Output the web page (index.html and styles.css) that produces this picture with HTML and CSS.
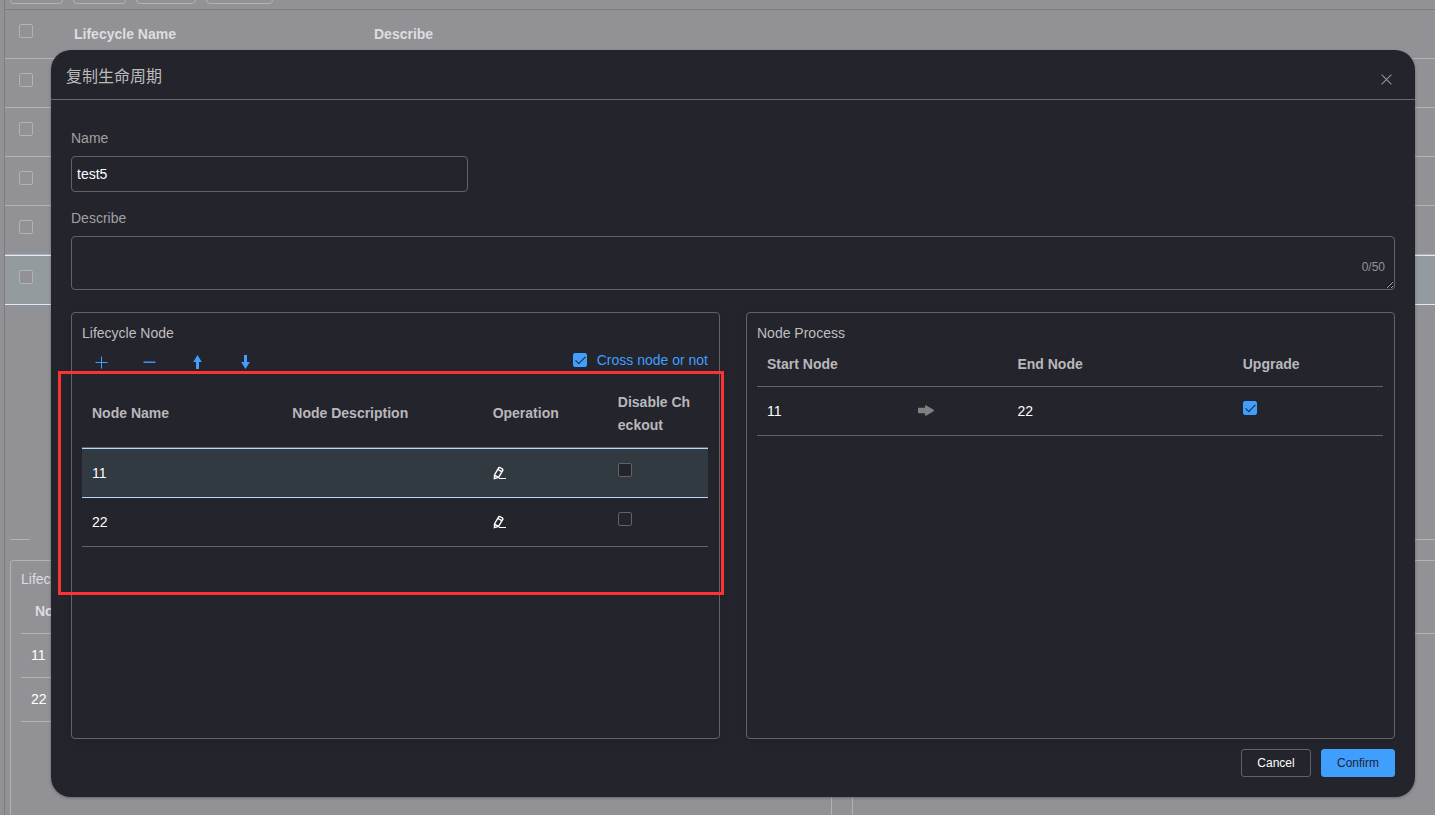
FILE: index.html
```html
<!DOCTYPE html>
<html lang="zh-CN">
<head>
<meta charset="utf-8">
<title>Lifecycle</title>
<link rel="stylesheet" href="styles.css">
</head>
<body>
<div class="page">
  <aside class="rail"></aside>
  <main class="main">
    <div class="actions">
      <button class="ghost w-53" type="button" aria-label="Add"></button>
      <button class="ghost w-53" type="button" aria-label="Edit"></button>
      <button class="ghost w-60" type="button" aria-label="Delete"></button>
      <button class="ghost w-67" type="button" aria-label="Refresh"></button>
    </div>
    <table class="table list">
      <colgroup><col class="c-check"><col class="c-name"><col></colgroup>
      <thead>
        <tr><th class="tick"><input class="check" type="checkbox" aria-label="Select all"></th><th>Lifecycle Name</th><th>Describe</th></tr>
      </thead>
      <tbody>
        <tr><td class="tick"><input class="check" type="checkbox" aria-label="Row 1"></td><td></td><td></td></tr>
        <tr><td class="tick"><input class="check" type="checkbox" aria-label="Row 2"></td><td></td><td></td></tr>
        <tr><td class="tick"><input class="check" type="checkbox" aria-label="Row 3"></td><td></td><td></td></tr>
        <tr><td class="tick"><input class="check" type="checkbox" aria-label="Row 4"></td><td></td><td></td></tr>
        <tr class="current"><td class="tick"><input class="check" type="checkbox" aria-label="Row 5"></td><td></td><td></td></tr>
      </tbody>
    </table>
    <div class="divider"><span class="rule start"></span><span class="rule"></span></div>
    <div class="details">
      <section class="detail">
        <h2 class="panel-title">Lifecycle Node</h2>
        <table class="table compact">
          <thead><tr><th>Node Name</th></tr></thead>
          <tbody><tr><td>11</td></tr><tr><td>22</td></tr></tbody>
        </table>
      </section>
      <section class="detail">
        <h2 class="panel-title">Node Process</h2>
        <table class="table compact">
          <thead><tr><th>Start Node</th></tr></thead>
        </table>
      </section>
    </div>
  </main>
</div>

<div class="overlay">
  <div class="dialog" role="dialog" aria-labelledby="dialog-title">
    <header class="dialog-head">
      <h1 class="dialog-title" id="dialog-title">复制生命周期</h1>
      <button class="close" type="button" aria-label="Close">
        <svg width="11" height="11" viewBox="0 0 11 11"><path d="M.6.6l9.8 9.8M10.4.6L.6 10.4" fill="none" stroke="#909399" stroke-width="1.1"/></svg>
      </button>
    </header>
    <form class="dialog-body">
      <label class="label" for="name">Name</label>
      <input class="text" id="name" type="text" value="test5">
      <label class="label" for="describe">Describe</label>
      <div class="area">
        <textarea class="text multi" id="describe" maxlength="50"></textarea>
        <span class="count">0/50</span>
      </div>
      <div class="panels">
        <section class="panel">
          <h2 class="panel-title">Lifecycle Node</h2>
          <div class="tools">
            <div class="tool-list">
              <button class="tool" type="button" aria-label="Add node"><svg width="14" height="14" viewBox="0 0 14 14"><path d="M7.500 1.500v12M1.500 7.500h12" fill="none" stroke="#409eff" stroke-width="1"/></svg></button>
              <button class="tool" type="button" aria-label="Remove node"><svg width="14" height="14" viewBox="0 0 14 14"><path d="M1.500 7.200h12" fill="none" stroke="#409eff" stroke-width="1.400"/></svg></button>
              <button class="tool" type="button" aria-label="Move up"><svg width="14" height="14" viewBox="0 0 14 14"><path d="M7.500 0l4.300 7H9v7H6V7H3.200z" fill="#409eff"/></svg></button>
              <button class="tool" type="button" aria-label="Move down"><svg width="14" height="14" viewBox="0 0 14 14"><path d="M7.500 14l4.300-7H9V0H6v7H3.200z" fill="#409eff"/></svg></button>
            </div>
            <label class="cross"><input class="check" type="checkbox" checked>Cross node or not</label>
          </div>
          <div class="marked">
            <table class="table nodes">
              <colgroup><col class="c-32"><col class="c-32"><col class="c-20"><col class="c-16"></colgroup>
              <thead><tr><th>Node Name</th><th>Node Description</th><th>Operation</th><th>Disable Checkout</th></tr></thead>
              <tbody>
                <tr class="current"><td>11</td><td></td><td><button class="edit" type="button" aria-label="Edit 11"><svg width="14" height="14" viewBox="0 0 14 14"><path d="M1.400 12.600L1.500 9l4.300-7.400.9-.2 3 1.700.2 1-4.300 7.200zM5 3.500l3.700 2.100M1.600 9.200l3.600 2.200" fill="none" stroke="#fff" stroke-width="1.400"/><path d="M6 12.500h7" stroke="#fff" stroke-width="1"/></svg></button></td><td class="tick"><input class="check" type="checkbox" aria-label="Disable checkout 11"></td></tr>
                <tr><td>22</td><td></td><td><button class="edit" type="button" aria-label="Edit 22"><svg width="14" height="14" viewBox="0 0 14 14"><path d="M1.400 12.600L1.500 9l4.300-7.400.9-.2 3 1.700.2 1-4.300 7.200zM5 3.500l3.700 2.100M1.600 9.200l3.600 2.200" fill="none" stroke="#fff" stroke-width="1.400"/><path d="M6 12.500h7" stroke="#fff" stroke-width="1"/></svg></button></td><td class="tick"><input class="check" type="checkbox" aria-label="Disable checkout 22"></td></tr>
              </tbody>
            </table>
            <div class="marker"></div>
          </div>
        </section>
        <section class="panel">
          <h2 class="panel-title">Node Process</h2>
          <table class="table process">
            <colgroup><col class="c-24"><col class="c-16"><col class="c-36"><col class="c-24"></colgroup>
            <thead><tr><th>Start Node</th><th></th><th>End Node</th><th>Upgrade</th></tr></thead>
            <tbody>
              <tr><td>11</td><td><svg width="18" height="12" viewBox="0 0 18 12"><path d="M2 2.800h6V.8Q8.200 0 9 .2L16.600 4.700Q17.400 5.400 16.600 6.200L9 10.800Q8.200 11 8 10.200V8.300H2Q1 8.300 1 7.300V3.800Q1 2.800 2 2.800z" fill="#808080"/></svg></td><td>22</td><td class="tick"><input class="check" type="checkbox" aria-label="Upgrade" checked></td></tr>
            </tbody>
          </table>
        </section>
      </div>
      <footer class="foot">
        <button class="btn" type="button">Cancel</button>
        <button class="btn primary" type="button">Confirm</button>
      </footer>
    </form>
  </div>
</div>
</body>
</html>
```

FILE: styles.css
```css
* { box-sizing: border-box; }

body {
  margin: 0;
  height: 100vh;
  overflow: hidden;
  background: #929195;
  color: #fff;
  font: 14px/20px "Liberation Sans", "Noto Sans CJK SC", sans-serif;
}

button { padding: 0; border: 0; background: none; font: inherit; color: inherit; }
svg { display: block; }
h1, h2 { margin: 0; font-weight: 400; }

/* list page behind the dialog */
.page {
  --line: #b2b2b3;
  --head: #dddde0;
  --row: #949b9e;
  --edge: #d9ecff;
  --box: #929195;
  display: flex;
  height: 100vh;
}
.rail { flex: none; width: 5px; border-right: 1px solid #7d7d7e; }
.main { flex: 1; min-width: 0; display: flex; flex-direction: column; overflow: hidden; }
.actions {
  flex: none;
  display: flex;
  align-items: flex-end;
  gap: 10px;
  height: 10px;
  padding: 0 5px 5px;
  border-bottom: 1px solid #7d7d7e;
}
.ghost { height: 28px; border: 1px solid var(--line); border-radius: 4px; }
.w-53 { width: 53px; }
.w-60 { width: 60px; }
.w-67 { width: 67px; }
.divider { display: flex; gap: 100px; margin: 234px 0 20px 5px; }
.rule { flex: 1; height: 1px; background: var(--line); }
.rule.start { flex: none; width: 20px; }
.details {
  flex: 1;
  display: grid;
  grid-template-columns: 1fr 1fr;
  gap: 20px;
  width: calc(117% - 4px);
  padding-left: 5px;
}
.detail {
  padding: 8px 10px;
  border: 1px solid var(--line);
  border-bottom: 0;
  border-radius: 4px 4px 0 0;
  color: var(--head);
}
.compact tbody { color: #fff; }

/* tables */
.table { width: 100%; table-layout: fixed; border-spacing: 0; }
.table th, .table td {
  height: 49px;
  padding: 0 10px;
  border-bottom: 1px solid var(--line);
  text-align: left;
  line-height: 23px;
  word-break: break-all;
}
.table th { color: var(--head); }
.table .tick { padding-top: 14px; vertical-align: top; line-height: 14px; }
.table .current td {
  height: 50px;
  border-top: 1px solid var(--edge);
  border-bottom-color: var(--edge);
  background: var(--row);
}
.table.nodes th { height: 71px; padding-top: 3px; }
.table.nodes th:last-child { padding-right: 16px; }
.table.process th { height: 44px; }
.table.compact th { height: 45px; padding-left: 14px; }
.table.compact td { height: 44px; }
.list .tick { padding-left: 14px; }
.c-check { width: 59px; }
.c-name { width: 300px; }
.c-16 { width: 16%; }
.c-20 { width: 20%; }
.c-24 { width: 24%; }
.c-32 { width: 32%; }
.c-36 { width: 36%; }

.check {
  appearance: none;
  position: relative;
  display: block;
  width: 14px;
  height: 14px;
  margin: 0;
  border: 1px solid var(--line);
  border-radius: 2px;
  background: var(--box);
}
.check:checked { border-color: #409eff; background: #409eff; }
.check:checked::after {
  content: "";
  position: absolute;
  left: 4px;
  top: 0;
  width: 4px;
  height: 9px;
  border: solid #24242d;
  border-width: 0 1px 1px 0;
  transform: rotate(45deg);
}

/* dialog */
.overlay { position: absolute; inset: 0; padding: 50px 20px 0 51px; }
.dialog {
  --line: #636363;
  --head: #b8b8bc;
  --row: #313941;
  --edge: #b3d8ff;
  --box: #24242d;
  border-radius: 20px;
  background: #24242d;
  box-shadow: 0 1px 3px rgba(0, 0, 0, .3);
}
.dialog-head {
  display: flex;
  justify-content: space-between;
  height: 50px;
  padding: 15px 23px 0 15px;
  border-bottom: 1px solid #68686b;
}
.dialog-title { font-size: 16px; line-height: 24px; color: #bcbcbc; }
.close { height: 29px; }
.dialog-body { display: flex; flex-direction: column; padding: 28px 20px 20px; }
.label { align-self: flex-start; margin-bottom: 8px; color: #a0a0a0; }
.text {
  width: 30%;
  height: 36px;
  margin: 0 0 16px;
  padding: 0 5px;
  border: 1px solid var(--line);
  border-radius: 4px;
  background: transparent;
  color: #fff;
  font: inherit;
  outline: 0;
}
.area { position: relative; margin-bottom: 22px; }
.multi { display: block; width: 100%; height: 54px; margin: 0; padding: 5px; resize: vertical; color-scheme: dark; }
.count { position: absolute; right: 10px; bottom: 13px; font-size: 12px; color: #909399; }

.panels { display: grid; grid-template-columns: 1fr 1fr; gap: 26px; }
.panel {
  min-width: 0;
  min-height: 427px;
  padding: 10px 11px 10px 10px;
  border: 1px solid var(--line);
  border-radius: 4px;
  box-shadow: 0 2px 12px rgba(0, 0, 0, .1);
}
.panel-title { font-size: 14px; line-height: 20px; color: #bfbfbf; }
.detail .panel-title { color: var(--head); }
.tools { display: flex; justify-content: space-between; align-items: center; height: 34px; }
.tool-list { display: flex; gap: 10px; }
.tool { display: grid; place-items: center; width: 38px; height: 20px; padding-top: 3px; }
.cross { display: flex; align-items: center; gap: 10px; color: #409eff; }
.edit { display: block; }

/* highlight frame around the node table */
.marked { position: relative; }
.marker { position: absolute; inset: -6px -16px -48px -24px; border: 3px solid #ff3233; pointer-events: none; }

.foot { display: flex; justify-content: flex-end; gap: 10px; margin-top: 10px; }
.btn {
  min-width: 70px;
  height: 28px;
  padding: 0 15px;
  border: 1px solid var(--line);
  border-radius: 3px;
  font-size: 12px;
  color: #fff;
}
.primary { border-color: #409eff; background: #409eff; color: #24242d; }
```
